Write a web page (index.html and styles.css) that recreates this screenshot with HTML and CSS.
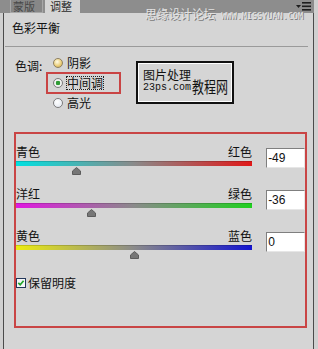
FILE: index.html
```html
<!DOCTYPE html>
<html lang="zh-CN">
<head>
  <meta charset="UTF-8">
  <title>调整 - 色彩平衡</title>
  <link rel="stylesheet" href="styles.css">
</head>
<body>
  <div class="window">
    <div class="tabbar">
      <span class="tab">蒙版</span>
      <span class="tab active">调整</span>
      <svg class="menu-icon" width="15" height="9" viewBox="0 0 15 9">
        <polygon points="0,3 5,3 2.5,6" fill="#1e1e1e"/>
        <rect x="6" y="0" width="9" height="1.6" fill="#1e1e1e"/>
        <rect x="6" y="3.5" width="9" height="1.6" fill="#1e1e1e"/>
        <rect x="6" y="7" width="9" height="1.6" fill="#1e1e1e"/>
      </svg>
    </div>

    <div class="panel">
      <div class="title">色彩平衡</div>
      <div class="sep"></div>

      <div class="tone">
        <span class="tone-label">色调:</span>
        <div class="radios">
          <div class="radio-row"><span class="radio shadow"></span><span>阴影</span></div>
          <div class="radio-row picked"><span class="radio checked"></span><span class="focus">中间调</span></div>
          <div class="radio-row"><span class="radio light"></span><span>高光</span></div>
        </div>
        <div class="stamp">
          <div class="stamp-left">
            <span>图片处理</span>
            <span class="stamp-url">23ps.com</span>
          </div>
          <span class="stamp-big">教程网</span>
        </div>
      </div>

      <div class="balance">
        <div class="slider-row">
          <div class="slider">
            <div class="ends"><span>青色</span><span>红色</span></div>
            <div class="bar cyan-red"></div>
            <svg class="thumb" style="margin-left:56px" width="9" height="8" viewBox="0 0 9 8"><path d="M4.5 0.5 L8.5 4 V7.5 H0.5 V4 Z" fill="#767676" stroke="#5c5c5c"/></svg>
          </div>
          <div class="value">-49</div>
        </div>

        <div class="slider-row">
          <div class="slider">
            <div class="ends"><span>洋红</span><span>绿色</span></div>
            <div class="bar magenta-green"></div>
            <svg class="thumb" style="margin-left:71px" width="9" height="8" viewBox="0 0 9 8"><path d="M4.5 0.5 L8.5 4 V7.5 H0.5 V4 Z" fill="#767676" stroke="#5c5c5c"/></svg>
          </div>
          <div class="value">-36</div>
        </div>

        <div class="slider-row">
          <div class="slider">
            <div class="ends"><span>黄色</span><span>蓝色</span></div>
            <div class="bar yellow-blue"></div>
            <svg class="thumb" style="margin-left:114px" width="9" height="8" viewBox="0 0 9 8"><path d="M4.5 0.5 L8.5 4 V7.5 H0.5 V4 Z" fill="#767676" stroke="#5c5c5c"/></svg>
          </div>
          <div class="value">0</div>
        </div>

        <div class="keep">
          <svg class="check" width="10" height="10" viewBox="0 0 10 10">
            <rect x="0.5" y="0.5" width="9" height="9" fill="#f4f6f8" stroke="#23385a"/>
            <polyline points="2.3,4.8 4.2,6.8 7.6,2.8" fill="none" stroke="#22a52a" stroke-width="1.7"/>
          </svg>
          <span>保留明度</span>
        </div>
      </div>
    </div>

    <div class="watermark">思缘设计论坛<span class="watermark-url">WWW.MISSYUAN.COM</span></div>
  </div>
</body>
</html>
```

FILE: styles.css
```css
* {
  box-sizing: border-box;
}
body {
  margin: 0;
  background-color: #d0d0d0;
  font-family: "Noto Sans CJK SC", "Liberation Sans", sans-serif;
  font-size: 12px;
  color: #111;
}
.window {
  position: relative;
  width: 314px;
  height: 349px;
}

/* tabs */
.tabbar {
  display: flex;
  align-items: flex-start;
  height: 13px;
  padding-left: 10px;
  background-color: #8d8d8d;
}
.tab {
  height: 13px;
  line-height: 12px;
  width: 33px;
  padding-left: 2px;
  font-size: 11px;
  color: #474747;
  background-color: #878787;
  border: 1px solid #a8a8a8;
  border-top: none;
  white-space: nowrap;
}
.tab.active {
  width: 35px;
  margin-left: 2px;
  padding-left: 5px;
  color: #2a2a2a;
  background-color: #d5d5d5;
  border: none;
}
.menu-icon {
  margin-left: auto;
  margin-right: 3px;
  margin-top: 2px;
}

/* panel */
.panel {
  width: 311px;
  height: 336px;
  margin-left: 3px;
  background-color: #d5d5d5;
  border-left: 1px solid #4b4b4b;
  border-right: 1px solid #4b4b4b;
}
.title {
  padding: 8px 0 0 8px;
  line-height: 14px;
}
.sep {
  height: 1px;
  margin: 11px 5px 0 1px;
  background-color: #9a9a9a;
}

.tone {
  display: flex;
  height: 85px;
  padding: 6px 0 0 11px;
}
.tone-label {
  width: 31px;
  margin-top: 6px;
  line-height: 14px;
}
.radios {
  display: flex;
  flex-direction: column;
  width: 75px;
}
.radio-row {
  display: flex;
  align-items: center;
  gap: 4px;
  height: 20px;
  padding-left: 7px;
  line-height: 14px;
}
.radio-row.picked {
  height: 22px;
  margin: -1px 0;
  padding-left: 5px;
  border: 2px solid #c94444;
}
.radio {
  width: 10px;
  height: 10px;
  border-radius: 50%;
  border: 1px solid #7c7c7c;
}
.radio.shadow {
  border-color: #8f8060;
  background: radial-gradient(circle at 40% 35%, #fffbe6, #ecd07c 55%, #c9a24a);
}
.radio.checked {
  background: radial-gradient(circle, #2f9b35 0 2px, #f7f7f7 2.6px, #d9d9d9 100%);
}
.radio.light {
  background: radial-gradient(circle at 40% 35%, #ffffff, #dfe5ee);
}
.focus {
  margin-left: -1px;
  line-height: 12px;
  border: 1px dotted #222;
}

.stamp {
  display: flex;
  align-items: flex-end;
  width: 98px;
  height: 43px;
  margin: 8px 0 0 15px;
  padding: 0 0 8px 5px;
  border: 2px solid #111;
  box-shadow: inset 0 0 0 1px #fff;
  white-space: nowrap;
}
.stamp-left {
  display: flex;
  flex-direction: column;
  width: 48px;
  line-height: 12px;
}
.stamp-left span:first-child {
  margin-bottom: 1px;
}
.stamp-url {
  font-family: "Liberation Mono", monospace;
  font-size: 10px;
}
.stamp-big {
  margin-left: 1px;
  line-height: 12px;
  transform: scaleY(1.35);
  transform-origin: bottom;
}

/* color balance box */
.balance {
  width: 293px;
  height: 196px;
  margin-left: 10px;
  padding-top: 11px;
  border: 2px solid #c94545;
}
.slider-row {
  display: flex;
  gap: 14px;
  margin-bottom: 12px;
}
.slider {
  width: 237px;
}
.ends {
  display: flex;
  justify-content: space-between;
  line-height: 14px;
}
.bar {
  height: 5px;
  margin-top: 2px;
  box-shadow: inset 0 1px 0 rgba(0, 0, 0, 0.15);
}
.cyan-red {
  background: linear-gradient(to right, #00e0e0, #8a8a8a 50%, #e01818);
}
.magenta-green {
  background: linear-gradient(to right, #e018e0, #8a8a8a 50%, #1fd01f);
}
.yellow-blue {
  background: linear-gradient(to right, #ecec10, #8a8a8a 50%, #1414d0);
}
.thumb {
  display: block;
  margin-top: 1px;
}
.value {
  width: 39px;
  height: 20px;
  margin-top: 3px;
  padding-left: 1px;
  font-family: "Liberation Sans", sans-serif;
  font-size: 12px;
  line-height: 18px;
  background-color: #fff;
  border: 1px solid;
  border-color: #7f7f7f #e6e6e6 #e6e6e6 #7f7f7f;
}
.keep {
  display: flex;
  align-items: center;
  gap: 2px;
  margin-top: 17px;
  line-height: 14px;
}

/* watermark over the tab bar */
.watermark {
  position: absolute;
  left: 145px;
  top: 8px;
  line-height: 12px;
  letter-spacing: -0.3px;
  color: #e2e2e2;
  text-shadow: 1px 1px 0 #7a7a7a;
  white-space: nowrap;
}
.watermark-url {
  margin-left: 6px;
  letter-spacing: 0;
  font-family: "DejaVu Sans Mono", monospace;
  font-size: 8.5px;
}
```
